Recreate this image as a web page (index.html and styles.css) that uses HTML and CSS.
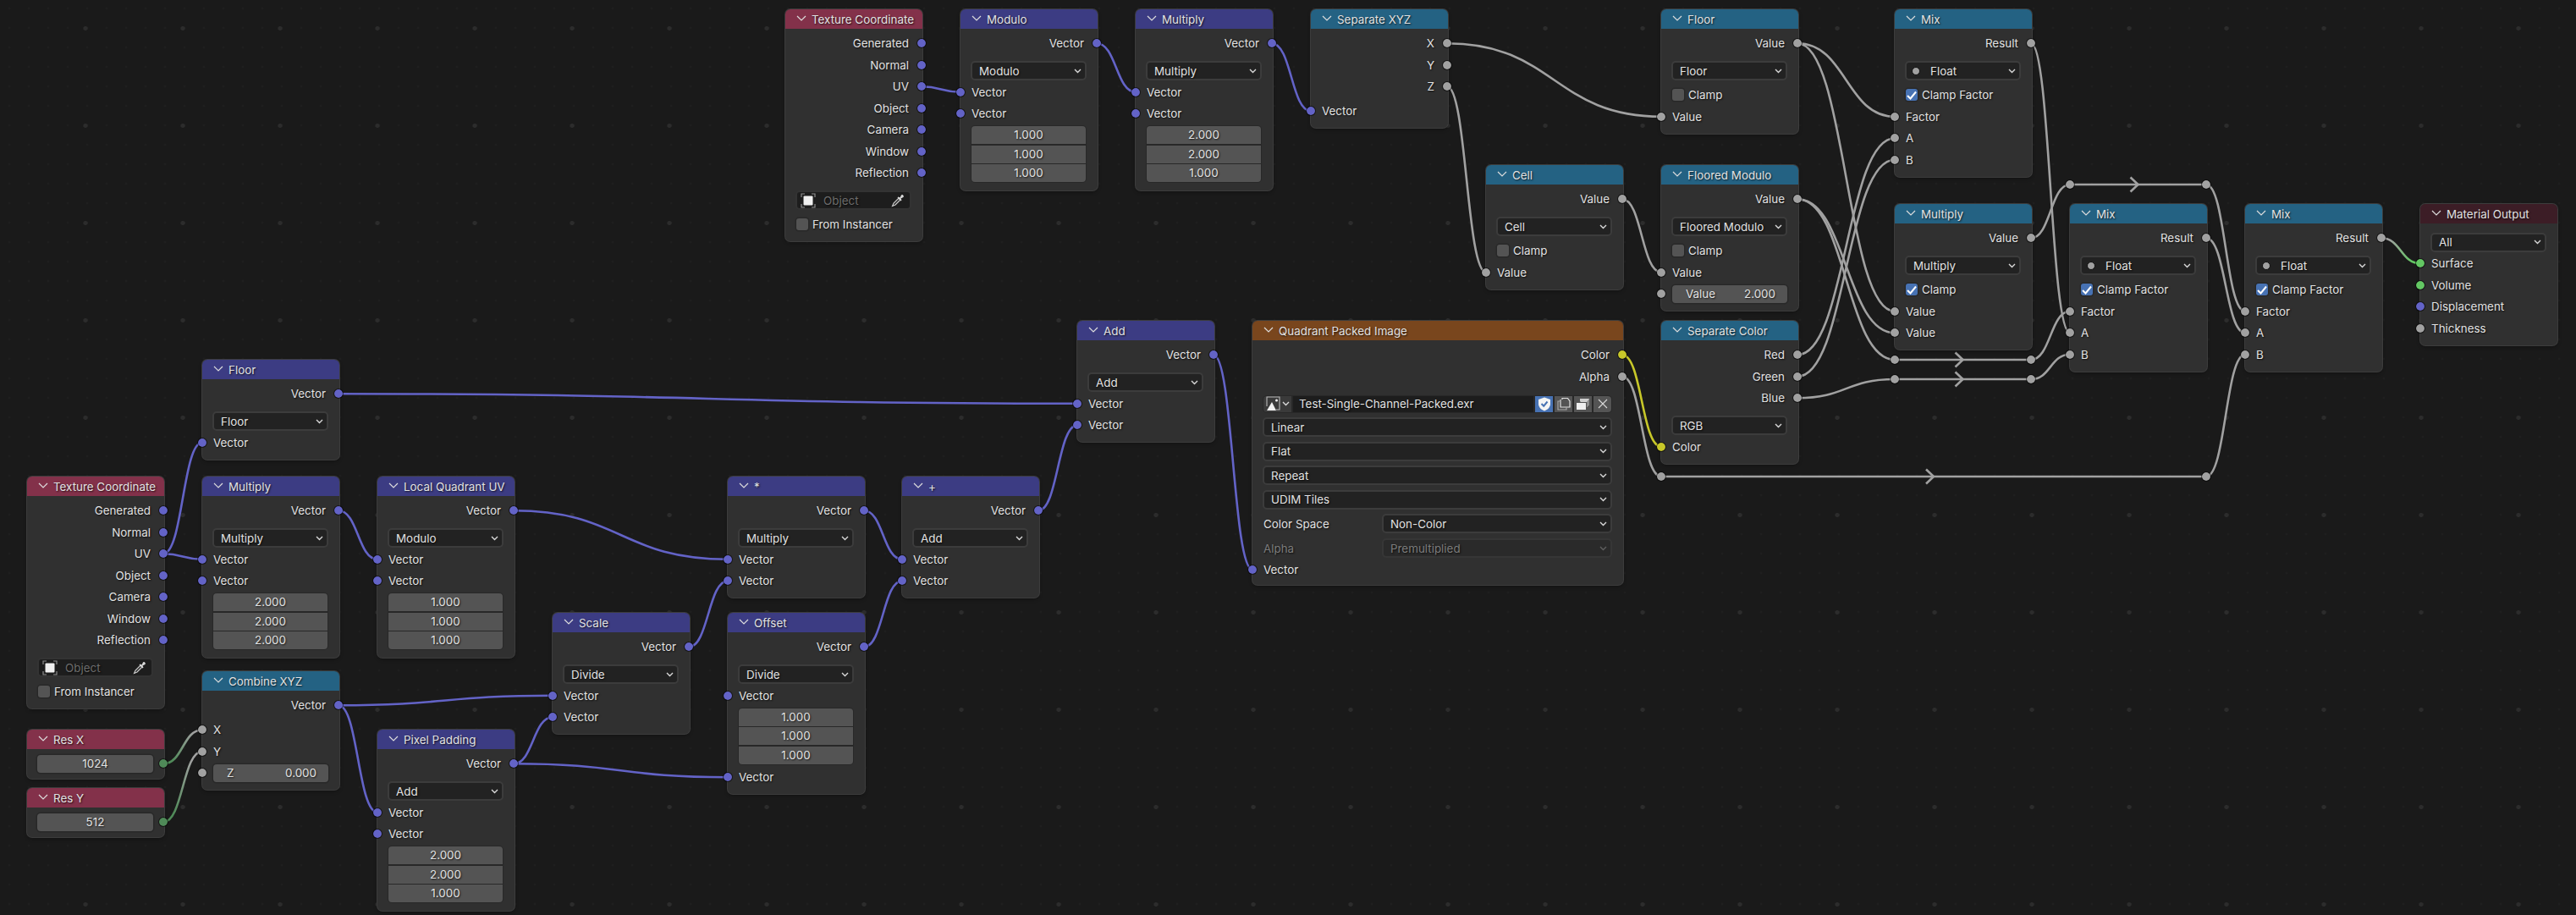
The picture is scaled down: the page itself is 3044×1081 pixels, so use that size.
FILE: index.html
```html
<!DOCTYPE html>
<html lang="en">
<head>
  <meta charset="UTF-8">
  <meta name="viewport" content="width=device-width, initial-scale=1.0">
  <title>Shader Editor</title>
  <link rel="stylesheet" href="styles.css">
</head>
<body>
  <main class="canvas" id="canvas">
    <svg class="links" id="links" width="3044" height="1081"><defs id="linkDefs"></defs></svg>
  </main>
  <script src="script.js"></script>
</body>
</html>
```

FILE: styles.css
```css
* {
  box-sizing: border-box;
}
body {
  margin: 0;
  background: #1a1a1a;
  overflow: hidden;
}
.canvas {
  position: relative;
  width: 3044px;
  height: 1081px;
  overflow: hidden;
  font: 13.4px Inter, "Noto Sans", sans-serif;
  color: #e2e2e2;
  text-shadow: 1px 1px 2px rgba(0,0,0,0.75);
  background-color: #1a1a1a;
  background-image:
    radial-gradient(circle at center, #2c2c2c 0, #2c2c2c 2.2px, transparent 2.8px),
    radial-gradient(circle at center, #222222 0, #222222 0.8px, transparent 1.4px);
  background-size: 115px 115px, 23px 23px;
  background-position: 43.5px -24px, -0.5px -1.5px;
}
.links {
  position: absolute;
  left: 0;
  top: 0;
  z-index: 1;
}
.links path {
  fill: none;
  stroke-width: 2.6;
  stroke-linecap: round;
}
.links polyline {
  fill: none;
  stroke-width: 2.6;
}

/* node */
.node {
  position: absolute;
  z-index: 2;
  width: 162px;
  background: #303030;
  border-radius: 6px;
  box-shadow: 0 0 0 1px #3c3c3c, 0 2px 4px rgba(0,0,0,0.35);
}
.node-wide {
  width: 438px;
}
.node-head {
  display: flex;
  align-items: center;
  gap: 6px;
  height: 23px;
  padding-left: 13px;
  border-radius: 6px 6px 0 0;
}
.head-input { background: #83314a; }
.head-vector { background: #3c3c83; }
.head-converter { background: #246283; }
.head-texture { background: #79461d; }
.head-output { background: #3c1d26; }
.head-chevron {
  flex: none;
  margin-top: -3px;
}
.node-body {
  padding: 4.5px 13px 7px 12px;
}
.node-wide .node-body {
  padding-bottom: 5px;
}

/* rows */
.node-row {
  position: relative;
  display: flex;
  align-items: center;
  height: 25.5px;
  white-space: nowrap;
}
.node-in {
  padding-left: 1px;
}
.node-out {
  justify-content: flex-end;
  padding-right: 3px;
}
.node-out + .node-in {
  margin-top: 3.5px;
}
.node-out .socket,
.node-value .socket {
  right: -18px;
}
.node-in .socket {
  left: -18px;
}
.node-row .socket {
  top: 6.75px;
}

/* sockets */
.socket {
  position: absolute;
  z-index: 3;
  width: 12px;
  height: 12px;
  border-radius: 50%;
  border: 1px solid rgba(0,0,0,0.55);
  background-clip: padding-box;
}
.socket-vector { background-color: #6363c7; }
.socket-float { background-color: #a1a1a1; }
.socket-color { background-color: #c7c729; }
.socket-shader { background-color: #63c763; }
.socket-int { background-color: #4f8a58; }

/* dropdowns */
.node-drop {
  display: flex;
  align-items: center;
  justify-content: space-between;
  height: 23px;
  margin: 8px 0 1px;
  padding: 0 4px 0 8px;
  background: #222222;
  border: 2px solid #3c3c3c;
  border-radius: 5px;
}
.node-body > .node-drop:first-child {
  margin-top: 6px;
}
.node-drop + .node-drop,
.node-image + .node-drop {
  margin-top: 5.6px;
}
.node-drop-float {
  justify-content: flex-start;
  padding-left: 6px;
}
.node-drop-float .drop-chevron {
  margin-left: auto;
}
.type-dot {
  width: 10px;
  height: 10px;
  margin-right: 12px;
  border-radius: 50%;
  background: #a1a1a1;
  border: 1px solid #111111;
}
.drop-chevron {
  flex: none;
}
.node-labelled {
  display: flex;
  align-items: center;
  margin-top: 5.6px;
  margin-bottom: 1px;
}
.node-labelled > span {
  width: 141px;
  flex: none;
  padding-left: 1px;
}
.node-labelled .node-drop {
  flex: 1;
  margin: 0;
}
.node-disabled {
  color: #7c7c7c;
}
.node-disabled .node-drop {
  background: #2a2a2a;
  border-color: #363636;
}
.node-disabled svg {
  opacity: 0.3;
}

/* checkbox */
.node-check {
  margin-top: 4.5px;
  padding-left: 1px;
  gap: 5px;
}
.check-box {
  flex: none;
  display: flex;
  align-items: center;
  justify-content: center;
  width: 14px;
  height: 14px;
  background: #545454;
  border-radius: 3px;
  box-shadow: 0 0 0 1.5px #282828;
}
.check-on {
  background: #4772b3;
}

/* number fields */
.node-stack {
  margin: 1px 0 2px;
  padding: 1px;
  background: #282828;
  border-radius: 5px;
}
.stack-num {
  height: 21px;
  line-height: 21px;
  text-align: center;
  background: #545454;
}
.stack-num + .stack-num {
  margin-top: 1.5px;
}
.stack-num:first-child {
  border-radius: 4px 4px 0 0;
}
.stack-num:last-child {
  border-radius: 0 0 4px 4px;
}
.node-field {
  flex: 1;
  display: flex;
  justify-content: space-between;
  height: 21px;
  line-height: 21px;
  padding: 0 14px 0 16px;
  background: #545454;
  border-radius: 4px;
  box-shadow: 0 0 0 1.5px #282828;
}
.node-field-center {
  justify-content: center;
  padding: 0;
}
.node-value {
  margin-bottom: -2px;
}

/* object picker */
.node-object {
  display: flex;
  align-items: center;
  height: 23px;
  margin: 8px 0 0 0;
  padding: 0 5px 0 4px;
  background: #1d1d1d;
  border: 2px solid #333333;
  border-radius: 5px;
  color: #6c6c6c;
}
.node-object span {
  flex: 1;
  padding-left: 9px;
}

/* image picker */
.node-image {
  display: flex;
  height: 21px;
  margin-top: 9px;
  gap: 2px;
  padding: 1px;
  background: #282828;
  border-radius: 5px;
}
.image-type {
  flex: none;
  display: flex;
  align-items: center;
  gap: 1px;
  width: 33px;
  padding-left: 3px;
  background: #3a3a3a;
  border-radius: 4px 0 0 4px;
}
.image-name {
  flex: 1;
  padding-left: 7px;
  line-height: 19px;
  background: #1d1d1d;
}
.image-btn {
  flex: none;
  display: flex;
  align-items: center;
  justify-content: center;
  width: 21px;
  background: #545454;
}
.image-btn:last-child {
  border-radius: 0 4px 4px 0;
}
.image-btn-on {
  background: #4772b3;
}
```

FILE: script.js
```js
const chevron = '<svg class="head-chevron" width="12" height="7" viewBox="0 0 12 7"><polyline points="1,1 6,6 11,1" fill="none" stroke="#dddddd" stroke-width="1.2"/></svg>';
const dropChevron = '<svg class="drop-chevron" width="9" height="6" viewBox="0 0 9 6"><polyline points="1,1 4.5,4.5 8,1" fill="none" stroke="#d8d8d8" stroke-width="1.4"/></svg>';
const tick = '<svg width="12" height="11" viewBox="0 0 12 11"><polyline points="1,6 4.5,9.5 11,1.5" fill="none" stroke="#ffffff" stroke-width="2"/></svg>';

const objectIcon = '<svg width="18" height="18" viewBox="0 0 18 18"><path d="M1 5V1H5M13 1H17V5M17 13V17H13M5 17H1V13" fill="none" stroke="#8c8c8c" stroke-width="1.2"/><rect x="3.5" y="3.5" width="11" height="11" rx="1" fill="#f0f0f0"/></svg>';
const pickerIcon = '<svg width="17" height="17" viewBox="0 0 17 17"><path d="M1.5 15.5L3 12L9 6L11 8L5 14Z" fill="#303030" stroke="#d0d0d0" stroke-width="1.1"/><path d="M8.5 4.5L10.5 5.5L12 2.5C13 0.8 16 3.6 14.4 5L11.5 6.5L12.5 8.5L11.5 9.5L7.5 5.5Z" fill="#d8d8d8"/></svg>';
const imageIcon = '<svg width="18" height="18" viewBox="0 0 18 18"><path d="M1 12V1H16V16H12" fill="none" stroke="#b8b8b8" stroke-width="1.1"/><path d="M1 17L7 7L12 17Z" fill="#f0f0f0"/><circle cx="12.5" cy="5" r="1.5" fill="#f0f0f0"/></svg>';
const shieldIcon = '<svg width="16" height="17" viewBox="0 0 16 17"><path d="M8 0.5L15 3V8C15 12 12 15 8 16.5C4 15 1 12 1 8V3Z" fill="#f4f4f4"/><polyline points="4.5,8 7.2,10.7 11.5,5.5" fill="none" stroke="#4772b3" stroke-width="2"/></svg>';
const copyIcon = '<svg width="16" height="16" viewBox="0 0 16 16"><path d="M4 3V12H15V5L12.5 1.5H6V3" fill="none" stroke="#e0e0e0" stroke-width="1.2"/><path d="M4 5H1V15H11V12" fill="none" stroke="#a8a8a8" stroke-width="1.2"/></svg>';
const packIcon = '<svg width="18" height="16" viewBox="0 0 18 16"><path d="M1 7H12V15H1Z" fill="#f0f0f0"/><path d="M5 5V2H16V9L13 12V6H6Z" fill="#d0d0d0"/><path d="M13 6L16 2V9L13 12Z" fill="#8e8e8e"/></svg>';
const closeIcon = '<svg width="12" height="12" viewBox="0 0 12 12"><path d="M1 1L11 11M11 1L1 11" stroke="#d8d8d8" stroke-width="1.1"/></svg>';

const out = (label, type = 'float') => `<div class="node-row node-out"><span>${label}</span><i class="socket socket-${type}" data-side="o"></i></div>`;
const inp = (label, type = 'float') => `<div class="node-row node-in"><i class="socket socket-${type}" data-side="i"></i><span>${label}</span></div>`;
const drop = (text) => `<div class="node-drop"><span>${text}</span>${dropChevron}</div>`;
const check = (label, on) => `<div class="node-row node-check"><span class="check-box ${on ? 'check-on' : ''}">${on ? tick : ''}</span><span>${label}</span></div>`;
const stack = (...nums) => `<div class="node-stack">${nums.map(n => `<div class="stack-num">${n}</div>`).join('')}</div>`;
const fieldIn = (label, value) => `<div class="node-row node-in"><i class="socket socket-float" data-side="i"></i><div class="node-field"><span>${label}</span><span>${value}</span></div></div>`;
const valueOut = (value) => `<div class="node-row node-value"><div class="node-field node-field-center">${value}</div><i class="socket socket-int" data-side="o"></i></div>`;
const labelled = (label, value, disabled) => `<div class="node-labelled ${disabled ? 'node-disabled' : ''}"><span>${label}</span>${drop(value)}</div>`;

const floatDrop = `<div class="node-drop node-drop-float"><i class="type-dot"></i><span>Float</span>${dropChevron}</div>`;
const objectPicker = `<div class="node-object">${objectIcon}<span>Object</span>${pickerIcon}</div>`;
const imagePicker = `<div class="node-image">
  <div class="image-type">${imageIcon}${dropChevron}</div>
  <div class="image-name">Test-Single-Channel-Packed.exr</div>
  <div class="image-btn image-btn-on">${shieldIcon}</div>
  <div class="image-btn">${copyIcon}</div>
  <div class="image-btn">${packIcon}</div>
  <div class="image-btn">${closeIcon}</div>
</div>`;

const texCoord = [
  out('Generated', 'vector'), out('Normal', 'vector'), out('UV', 'vector'), out('Object', 'vector'),
  out('Camera', 'vector'), out('Window', 'vector'), out('Reflection', 'vector'),
  objectPicker, check('From Instancer', false),
];
const mathNode = (op, clamp, twoValues) => [
  out('Value'), drop(op), check('Clamp', clamp), inp('Value'),
].concat(twoValues ? [inp('Value')] : []);
const mixNode = [
  out('Result'), floatDrop, check('Clamp Factor', true), inp('Factor'), inp('A'), inp('B'),
];
const vecMath = (op, extra = []) => [
  out('Vector', 'vector'), drop(op), inp('Vector', 'vector'), inp('Vector', 'vector'),
].concat(extra);

const nodes = [
  { id: 'tcTop', title: 'Texture Coordinate', head: 'input', x: 928, y: 11, rows: texCoord },
  { id: 'modulo', title: 'Modulo', head: 'vector', x: 1135, y: 11, rows: vecMath('Modulo', [stack('1.000', '1.000', '1.000')]) },
  { id: 'mulTop', title: 'Multiply', head: 'vector', x: 1342, y: 11, rows: vecMath('Multiply', [stack('2.000', '2.000', '1.000')]) },
  { id: 'sepXyz', title: 'Separate XYZ', head: 'converter', x: 1549, y: 11, rows: [out('X'), out('Y'), out('Z'), inp('Vector', 'vector')] },
  { id: 'cell', title: 'Cell', head: 'converter', x: 1756, y: 195, rows: mathNode('Cell', false) },
  { id: 'floorTop', title: 'Floor', head: 'converter', x: 1963, y: 11, rows: mathNode('Floor', false) },
  { id: 'floored', title: 'Floored Modulo', head: 'converter', x: 1963, y: 195, rows: [out('Value'), drop('Floored Modulo'), check('Clamp', false), inp('Value'), fieldIn('Value', '2.000')] },
  { id: 'sepColor', title: 'Separate Color', head: 'converter', x: 1963, y: 379, rows: [out('Red'), out('Green'), out('Blue'), drop('RGB'), inp('Color', 'color')] },
  { id: 'mixA', title: 'Mix', head: 'converter', x: 2239, y: 11, rows: mixNode },
  { id: 'mulFloat', title: 'Multiply', head: 'converter', x: 2239, y: 241, rows: mathNode('Multiply', true, true) },
  { id: 'mixB', title: 'Mix', head: 'converter', x: 2446, y: 241, rows: mixNode },
  { id: 'mixC', title: 'Mix', head: 'converter', x: 2653, y: 241, rows: mixNode },
  { id: 'output', title: 'Material Output', head: 'output', x: 2860, y: 241, rows: [drop('All'), inp('Surface', 'shader'), inp('Volume', 'shader'), inp('Displacement', 'vector'), inp('Thickness')] },
  { id: 'image', title: 'Quadrant Packed Image', head: 'texture', x: 1480, y: 379, wide: true, rows: [
    out('Color', 'color'), out('Alpha'), imagePicker,
    drop('Linear'), drop('Flat'), drop('Repeat'), drop('UDIM Tiles'),
    labelled('Color Space', 'Non-Color'), labelled('Alpha', 'Premultiplied', true),
    inp('Vector', 'vector'),
  ] },
  { id: 'add', title: 'Add', head: 'vector', x: 1273, y: 379, rows: vecMath('Add') },
  { id: 'floorLeft', title: 'Floor', head: 'vector', x: 239, y: 425, rows: [out('Vector', 'vector'), drop('Floor'), inp('Vector', 'vector')] },
  { id: 'tcLeft', title: 'Texture Coordinate', head: 'input', x: 32, y: 563, rows: texCoord },
  { id: 'mulLeft', title: 'Multiply', head: 'vector', x: 239, y: 563, rows: vecMath('Multiply', [stack('2.000', '2.000', '2.000')]) },
  { id: 'local', title: 'Local Quadrant UV', head: 'vector', x: 446, y: 563, rows: vecMath('Modulo', [stack('1.000', '1.000', '1.000')]) },
  { id: 'times', title: '*', head: 'vector', x: 860, y: 563, rows: vecMath('Multiply') },
  { id: 'plus', title: '+', head: 'vector', x: 1066, y: 563, rows: vecMath('Add') },
  { id: 'scale', title: 'Scale', head: 'vector', x: 653, y: 724, rows: vecMath('Divide') },
  { id: 'offset', title: 'Offset', head: 'vector', x: 860, y: 724, rows: [out('Vector', 'vector'), drop('Divide'), inp('Vector', 'vector'), stack('1.000', '1.000', '1.000'), inp('Vector', 'vector')] },
  { id: 'combine', title: 'Combine XYZ', head: 'converter', x: 239, y: 793, rows: [out('Vector', 'vector'), inp('X'), inp('Y'), fieldIn('Z', '0.000')] },
  { id: 'resX', title: 'Res X', head: 'input', x: 32, y: 862, rows: [valueOut('1024')] },
  { id: 'resY', title: 'Res Y', head: 'input', x: 32, y: 931, rows: [valueOut('512')] },
  { id: 'padding', title: 'Pixel Padding', head: 'vector', x: 446, y: 862, rows: vecMath('Add', [stack('2.000', '2.000', '1.000')]) },
];

const reroutes = { r1: [2239, 425], r2: [2400, 425], r3: [2239, 448], r4: [2400, 448], r5: [2446, 218], r6: [2607, 218], r7: [1963, 563], r8: [2607, 563] };

// from, to, and a third entry for the links that carry an arrow
const links = [
  ['tcTop.o2', 'modulo.i0'], ['modulo.o0', 'mulTop.i0'], ['mulTop.o0', 'sepXyz.i0'],
  ['sepXyz.o0', 'floorTop.i0'], ['sepXyz.o2', 'cell.i0'], ['cell.o0', 'floored.i0'],
  ['floorTop.o0', 'mixA.i0'], ['floorTop.o0', 'mulFloat.i0'],
  ['floored.o0', 'mulFloat.i1'], ['floored.o0', 'r1'],
  ['sepColor.o0', 'mixA.i1'], ['sepColor.o1', 'mixA.i2'], ['sepColor.o2', 'r3'],
  ['image.o0', 'sepColor.i0'], ['image.o1', 'r7'],
  ['r1', 'r2', true], ['r3', 'r4', true], ['r5', 'r6', true], ['r7', 'r8', true],
  ['r2', 'mixB.i0'], ['r4', 'mixB.i2'], ['mixA.o0', 'mixB.i1'],
  ['mulFloat.o0', 'r5'], ['r6', 'mixC.i0'], ['mixB.o0', 'mixC.i1'], ['r8', 'mixC.i2'],
  ['mixC.o0', 'output.i0'],
  ['tcLeft.o2', 'floorLeft.i0'], ['tcLeft.o2', 'mulLeft.i0'],
  ['floorLeft.o0', 'add.i0'], ['mulLeft.o0', 'local.i0'], ['local.o0', 'times.i0'],
  ['times.o0', 'plus.i0'], ['plus.o0', 'add.i1'], ['add.o0', 'image.i0'],
  ['combine.o0', 'scale.i0'], ['combine.o0', 'padding.i0'],
  ['padding.o0', 'scale.i1'], ['padding.o0', 'offset.i1'],
  ['scale.o0', 'times.i1'], ['offset.o0', 'plus.i1'],
  ['resX.o0', 'combine.i0'], ['resY.o0', 'combine.i1'],
];

const canvas = document.getElementById('canvas');
const svg = document.getElementById('links');
const defs = document.getElementById('linkDefs');
const sockets = {};

nodes.forEach(({ id, title, head, x, y, wide, rows }) => {
  const node = document.createElement('section');
  node.className = wide ? 'node node-wide' : 'node';
  node.style.left = x + 'px';
  node.style.top = y + 'px';
  node.innerHTML = `<header class="node-head head-${head}">${chevron}<span>${title}</span></header><div class="node-body">${rows.join('')}</div>`;
  canvas.appendChild(node);

  const count = { o: 0, i: 0 };
  node.querySelectorAll('.socket').forEach(socket => {
    const side = socket.dataset.side;
    sockets[`${id}.${side}${count[side]++}`] = socket;
  });
});

Object.entries(reroutes).forEach(([id, [x, y]]) => {
  const socket = document.createElement('i');
  socket.className = 'socket socket-float';
  socket.style.left = x - 6 + 'px';
  socket.style.top = y - 6 + 'px';
  canvas.appendChild(socket);
  sockets[id] = socket;
});

function centerOf (socket) {
  const box = socket.getBoundingClientRect();
  return { x: box.left + box.width / 2, y: box.top + box.height / 2, color: getComputedStyle(socket).backgroundColor };
}

function svgEl (name, attrs) {
  const el = document.createElementNS('http://www.w3.org/2000/svg', name);
  Object.entries(attrs).forEach(([key, value]) => el.setAttribute(key, value));
  return el;
}

links.forEach(([from, to, arrow], index) => {
  const a = centerOf(sockets[from]);
  const b = centerOf(sockets[to]);
  const handle = Math.abs(b.x - a.x) * 0.5;
  let stroke = a.color;

  if (a.color !== b.color) {
    const gradient = svgEl('linearGradient', { id: 'link' + index, gradientUnits: 'userSpaceOnUse', x1: a.x, y1: a.y, x2: b.x, y2: b.y });
    gradient.appendChild(svgEl('stop', { offset: '0.15', 'stop-color': a.color }));
    gradient.appendChild(svgEl('stop', { offset: '0.85', 'stop-color': b.color }));
    defs.appendChild(gradient);
    stroke = `url(#link${index})`;
  }

  svg.appendChild(svgEl('path', {
    d: `M${a.x} ${a.y}C${a.x + handle} ${a.y} ${b.x - handle} ${b.y} ${b.x} ${b.y}`,
    stroke,
  }));

  if (arrow) {
    const midX = (a.x + b.x) / 2;
    const midY = a.y;
    svg.appendChild(svgEl('polyline', {
      points: `${midX - 9},${midY - 8.5} ${midX},${midY} ${midX - 9},${midY + 8.5}`,
      stroke,
    }));
  }
});
```
